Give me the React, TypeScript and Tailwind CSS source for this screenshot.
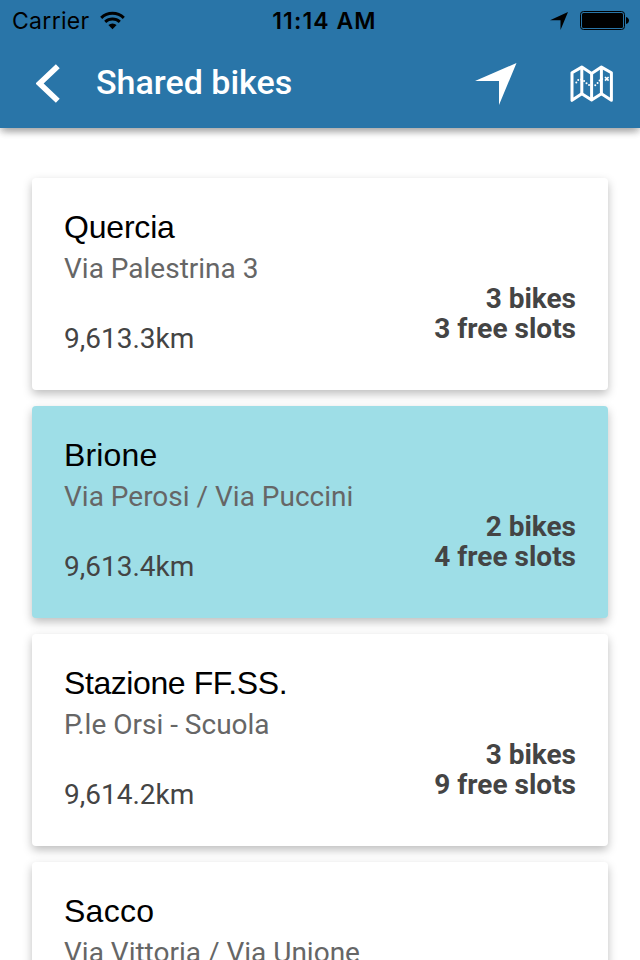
type Station = {
  name: string;
  address: string;
  distance: string;
  bikes: string;
  slots: string;
  highlighted?: boolean;
  nameTracking: string;
};

const stations: Station[] = [
  { name: "Quercia", address: "Via Palestrina 3", distance: "9,613.3km", bikes: "3 bikes", slots: "3 free slots", nameTracking: "tracking-[-0.2px]" },
  { name: "Brione", address: "Via Perosi / Via Puccini", distance: "9,613.4km", bikes: "2 bikes", slots: "4 free slots", highlighted: true, nameTracking: "tracking-[0.15px]" },
  { name: "Stazione FF.SS.", address: "P.le Orsi - Scuola", distance: "9,614.2km", bikes: "3 bikes", slots: "9 free slots", nameTracking: "tracking-[-0.42px]" },
  { name: "Sacco", address: "Via Vittoria / Via Unione", distance: "9,614.3km", bikes: "4 bikes", slots: "2 free slots", nameTracking: "tracking-[0.25px]" },
];

function StatusBar() {
  return (
    <div className="grid h-10 grid-cols-3 items-center font-['Inter',sans-serif] text-black">
      <div className="flex items-center pl-3">
        <span className="pt-[2px] text-[23px] leading-[38px] tracking-[0.3px]">Carrier</span>
        <svg className="ml-[10px] h-[19px] w-[26px]" viewBox="0 0 26 19">
          <g fill="none" stroke="black" strokeWidth="3">
            <path d="M1.2 6.8a16.5 16.5 0 0 1 22.6 0" />
            <path d="M5.2 10.9a10.8 10.8 0 0 1 14.6 0" />
          </g>
          <path d="M12.5 18.2 8.4 14a6 6 0 0 1 8.2 0z" />
        </svg>
      </div>
      <span className="pl-[9px] pt-[2px] text-center text-[23px] font-semibold leading-[38px] tracking-[1.1px]">11:14 AM</span>
      <div className="flex items-center justify-end pr-[11px]">
        <svg className="mr-3 mt-[2px] h-[18px] w-[18px]" viewBox="0 0 18 18">
          <path d="M18 0 10.5 18V8.2H0z" />
        </svg>
        <svg className="mt-[1px] h-[19px] w-[49px]" viewBox="0 0 49 19">
          <rect x=".5" y=".5" width="44" height="18" rx="3" fill="none" stroke="black" />
          <rect x="2" y="2" width="41" height="15" rx="1.5" />
          <path d="M46 6c4 1 4 6 0 7z" />
        </svg>
      </div>
    </div>
  );
}

function MapIcon() {
  return (
    <svg className="h-[38px] w-[44px]" viewBox="570 65.5 44 38" fill="none" stroke="white" strokeLinejoin="round">
      <path strokeWidth="3" d="M572 73.3 581.8 67.6 591.6 74 601.4 67.6 611.4 73.3V100.8L601.4 94.3 591.6 100.6 581.8 94.3 572 100.8z" />
      <path strokeWidth="3" d="M581.8 68V94M591.6 74V100M601.4 68V94" />
      <path strokeWidth="2" strokeLinecap="round" strokeDasharray="0 3.2" d="M576.3 83C578 79 581 79 584.5 81.8C587.5 85 590.5 87.5 594.5 86C598.5 84.5 598.5 79.5 603.5 79.2" />
      <path strokeWidth="1.7" d="m605 77.5 3.6 3.6m0-3.6-3.6 3.6" />
    </svg>
  );
}

function Header() {
  return (
    <header className="z-10 h-32 shrink-0 bg-[#2975a8] shadow-[0_6px_8px_-3px_rgba(0,0,0,0.2),0_4px_6px_rgba(0,0,0,0.14),0_2px_10px_rgba(0,0,0,0.1)]">
      <StatusBar />
      <div className="flex h-[88px] items-center pr-[26px] pl-9">
        <svg className="h-10 w-6 shrink-0" viewBox="0 0 24 40">
          <path d="M21.8 2.2 3.6 19.5l18.2 17.3" fill="none" stroke="white" strokeWidth="5.6" />
        </svg>
        <h1 className="ml-9 flex-1 pb-[5px] font-['Roboto',sans-serif] text-[34px] font-medium leading-[44px] text-white">
          Shared bikes
        </h1>
        <svg className="mr-[53px] h-[42px] w-[42px]" viewBox="0 0 42 42">
          <path d="M41.5 0 24 42V18H0z" fill="white" />
        </svg>
        <MapIcon />
      </div>
    </header>
  );
}

function StationCard({ station }: { station: Station }) {
  return (
    <article
      className={`flex h-[212px] shrink-0 justify-between rounded-[4px] px-8 font-['Roboto',sans-serif] text-[28px] text-[#444] shadow-[0_4px_10px_rgba(0,0,0,0.26)] ${station.highlighted ? "bg-[#9edee7]" : "bg-white"}`}
    >
      <div className="pt-[30px]">
        <h2 className={`font-['Liberation_Sans',sans-serif] text-[32px] leading-[38px] text-black ${station.nameTracking}`}>
          {station.name}
        </h2>
        <p className="pt-[3px] leading-[40px] text-[#666]">{station.address}</p>
        <p className="pt-[30px] leading-[40px]">{station.distance}</p>
      </div>
      <div className="pt-[106px] text-right font-bold leading-[30px]">
        <p>{station.bikes}</p>
        <p>{station.slots}</p>
      </div>
    </article>
  );
}

export default function App() {
  return (
    <div className="flex h-[960px] w-[640px] flex-col overflow-hidden bg-white">
      <Header />
      <main className="flex min-h-0 flex-1 flex-col gap-4 overflow-hidden px-8 pt-[50px]">
        {stations.map((station) => (
          <StationCard key={station.name} station={station} />
        ))}
      </main>
    </div>
  );
}
